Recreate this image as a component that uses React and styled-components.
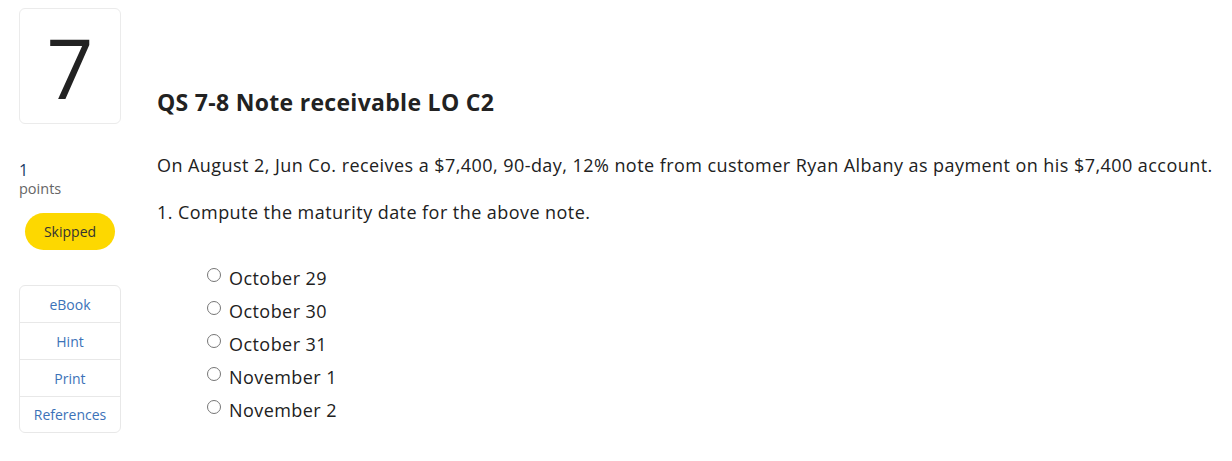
import React from "react";
import styled, { createGlobalStyle } from "styled-components";

const GlobalStyle = createGlobalStyle`
  body {
    margin: 0;
    background: #fff;
    font-family: "Open Sans", "Liberation Sans", sans-serif;
    color: #212121;
  }
`;

const options = ["October 29", "October 30", "October 31", "November 1", "November 2"];
const links = ["eBook", "Hint", "Print", "References"];

function App() {
  return (
    <>
      <GlobalStyle />
      <Page>
        <Sidebar>
          <NumberCard>7</NumberCard>
          <Points>
            <PointValue>1</PointValue>
            <PointLabel>points</PointLabel>
          </Points>
          <Status>Skipped</Status>
          <LinkBox>
            {links.map((l) => (
              <LinkRow key={l}>{l}</LinkRow>
            ))}
          </LinkBox>
        </Sidebar>
        <Main>
          <Title>QS 7-8 Note receivable LO C2</Title>
          <Paragraph>
            On August 2, Jun Co. receives a $7,400, 90-day, 12% note from customer Ryan Albany as
            payment on his $7,400 account.
          </Paragraph>
          <Question>1. Compute the maturity date for the above note.</Question>
          <Options>
            {options.map((o) => (
              <Option key={o}>
                <Radio type="radio" name="maturity" />
                {o}
              </Option>
            ))}
          </Options>
        </Main>
      </Page>
    </>
  );
}

export default App;

const Page = styled.div`
  display: flex;
  padding: 8px 0 0 19px;
`;

const Sidebar = styled.div`
  width: 102px;
  flex-shrink: 0;
  display: flex;
  flex-direction: column;
`;

const NumberCard = styled.div`
  box-sizing: border-box;
  height: 116px;
  padding-top: 2px;
  border: 1px solid #ebebeb;
  border-radius: 6px;
  display: flex;
  align-items: center;
  justify-content: center;
  font-size: 82px;
  font-weight: 500;
  color: #222;
  line-height: 1;
`;

const Points = styled.div`
  margin-top: 36px;
  display: flex;
  flex-direction: column;
`;

const PointValue = styled.div`
  font-size: 16px;
  color: #1b3b66;
  line-height: 20px;
`;

const PointLabel = styled.div`
  font-size: 14.5px;
  color: #666;
  line-height: 18px;
`;

const Status = styled.div`
  margin: 15px 0 0 6px;
  width: 90px;
  height: 37px;
  border-radius: 19px;
  background: #fdd800;
  color: #333;
  font-size: 14px;
  display: flex;
  align-items: center;
  justify-content: center;
`;

const LinkBox = styled.div`
  margin-top: 35px;
  border: 1px solid #e8e8e8;
  border-radius: 6px;
  display: flex;
  flex-direction: column;
`;

const LinkRow = styled.div`
  height: 36px;
  display: flex;
  align-items: center;
  justify-content: center;
  font-size: 14px;
  color: #3c72b8;
  & + & {
    border-top: 1px solid #e8e8e8;
  }
  &:last-child {
    height: 35px;
  }
`;

const Main = styled.div`
  margin-left: 36px;
  display: flex;
  flex-direction: column;
`;

const Title = styled.h1`
  margin: 80px 0 0;
  font-size: 23px;
  font-weight: 700;
  line-height: 28px;
  letter-spacing: 0.3px;
  color: #222;
`;

const Paragraph = styled.p`
  margin: 37px 0 0;
  font-size: 18px;
  line-height: 24px;
  letter-spacing: 0.44px;
  white-space: nowrap;
`;

const Question = styled.p`
  margin: 23px 0 0;
  font-size: 18px;
  line-height: 24px;
  letter-spacing: 0.44px;
`;

const Options = styled.div`
  margin: 37px 0 0 50px;
  display: flex;
  flex-direction: column;
`;

const Option = styled.label`
  height: 33px;
  display: flex;
  align-items: center;
  font-size: 18px;
  letter-spacing: 0.44px;
`;

const Radio = styled.input`
  margin: 0 8px 0 0;
  width: 14px;
  height: 14px;
  position: relative;
  top: -3px;
`;
